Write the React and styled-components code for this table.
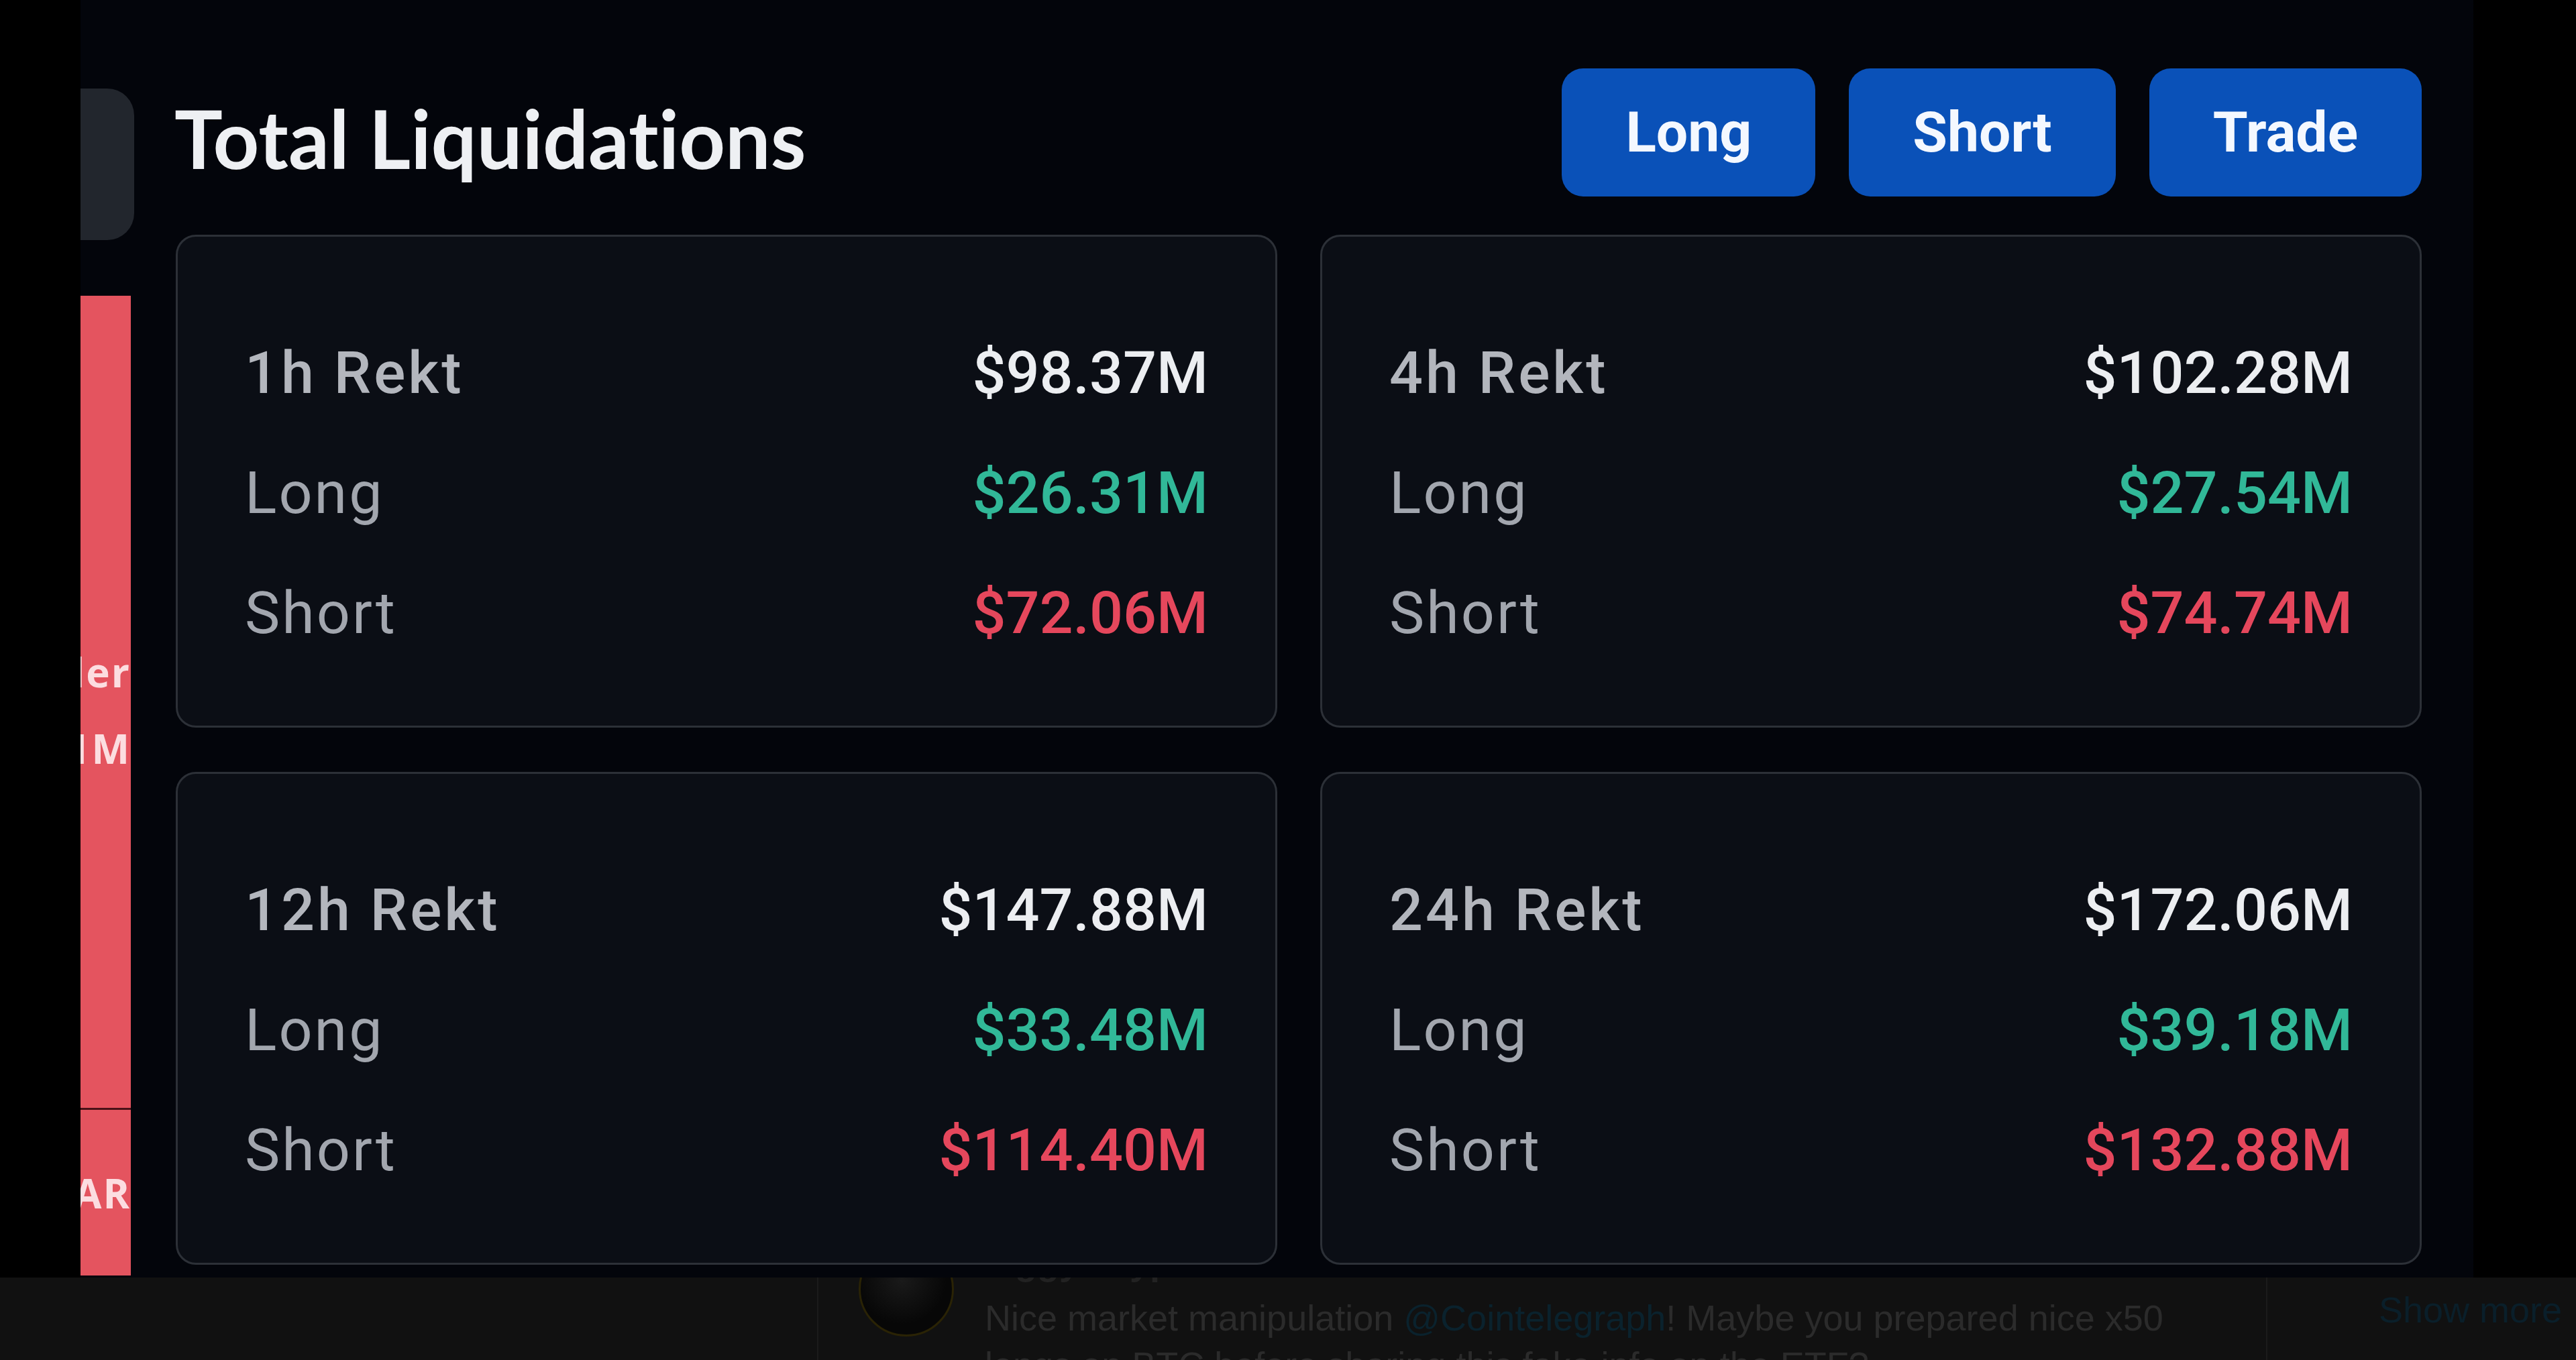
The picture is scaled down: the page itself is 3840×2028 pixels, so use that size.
import styled, { createGlobalStyle } from 'styled-components';

const GlobalStyle = createGlobalStyle`
  html, body {
    margin: 0;
    padding: 0;
    background: #000;
  }
  body {
    width: 3840px;
    height: 2028px;
    overflow: hidden;
  }
`;

const Page = styled.div`
  width: 3840px;
  height: 2028px;
  display: flex;
  flex-direction: column;
  background: #000;
`;

const Stage = styled.div`
  height: 1905px;
  display: flex;
  flex-shrink: 0;
`;

const Gutter = styled.div`
  width: ${p => p.$w}px;
  flex-shrink: 0;
  background: #000;
`;

// тёмная панель виджета
const Panel = styled.section`
  width: 3567px;
  flex-shrink: 0;
  display: flex;
  background: #03050b;
  overflow: hidden;
`;

/* ---------- левая обрезанная колонка ---------- */

const SideRail = styled.div`
  width: 80px;
  flex-shrink: 0;
  display: flex;
  flex-direction: column;
`;

const RailTab = styled.div`
  margin-top: 132px;
  height: 226px;
  background: #22262d;
  border-radius: 0 40px 40px 0;
`;

const RailBar = styled.div`
  margin-top: 83px;
  width: 75px;
  height: 1461px;
  display: flex;
  flex-direction: column;
  background: #e4545f;
`;

const RailSegment = styled.div`
  height: ${p => p.$h}px;
  padding-top: ${p => p.$shift || 0}px;
  box-sizing: border-box;
  display: flex;
  flex-direction: column;
  justify-content: center;
  align-items: flex-end;
  overflow: hidden;
`;

const RailDivider = styled.div`
  height: 3px;
  background: #4a1218;
`;

const RailText = styled.span`
  font-family: 'Open Sans', 'Liberation Sans', sans-serif;
  font-weight: 700;
  font-size: 60px;
  line-height: 114px;
  letter-spacing: 2px;
  color: rgba(255, 240, 242, 0.88);
  white-space: nowrap;
`;

/* ---------- основная часть ---------- */

const Main = styled.div`
  flex: 1;
  min-width: 0;
  padding: 102px 77px 0 62px;
  display: flex;
  flex-direction: column;
`;

const Header = styled.div`
  height: 191px;
  display: flex;
  justify-content: space-between;
  align-items: flex-start;
`;

const Title = styled.h1`
  margin: 0 0 0 -2px;
  padding-top: 44px;
  font-family: Lato, 'Open Sans', sans-serif;
  font-weight: 700;
  font-size: 120px;
  line-height: 120px;
  font-variant-ligatures: none;
  color: #eef0f3;
  white-space: nowrap;
`;

const Actions = styled.div`
  display: flex;
  gap: 50px;
`;

const ActionButton = styled.button`
  height: 191px;
  padding: 0 95px;
  border: none;
  border-radius: 32px;
  background: #0a51b8;
  color: #f4f8ff;
  font-family: Roboto, 'Liberation Sans', sans-serif;
  font-weight: 700;
  font-size: 84px;
  cursor: pointer;
`;

const Grid = styled.div`
  margin-top: 57px;
  display: grid;
  grid-template-columns: 1fr 1fr;
  column-gap: 64px;
  row-gap: 66px;
`;

const Card = styled.div`
  height: 735px;
  box-sizing: border-box;
  border: 3px solid #2c3037;
  border-radius: 30px;
  background: #0b0e15;
  padding: 113px 100px 0 100px;
`;

const StatRow = styled.div`
  height: 179px;
  display: flex;
  justify-content: space-between;
  font-family: Roboto, 'Liberation Sans', sans-serif;
  font-size: 88px;
  line-height: 179px;
`;

const StatLabel = styled.span`
  color: ${p => (p.$head ? '#b3b6bd' : '#a2a6ae')};
  font-weight: ${p => (p.$head ? 500 : 400)};
  letter-spacing: ${p => (p.$head ? 4 : 3)}px;
`;

const tones = {
  total: '#eceef1',
  long: '#31b898',
  short: '#e5475c',
};

const StatValue = styled.span`
  font-weight: 500;
  color: ${p => tones[p.$tone]};
`;

/* ---------- обрезанный твит снизу ---------- */

const TweetStrip = styled.footer`
  height: 123px;
  display: flex;
  background: #111111;
  overflow: hidden;
`;

const StripSide = styled.div`
  width: ${p => p.$w}px;
  flex-shrink: 0;
  box-sizing: border-box;
  padding: 13px 0 0 ${p => p.$pad || 0}px;
`;

const TweetColumn = styled.div`
  width: 2162px;
  flex-shrink: 0;
  box-sizing: border-box;
  border-left: 2px solid #1b1b1b;
  border-right: 2px solid #1b1b1b;
  padding-left: 60px;
  display: flex;
  gap: 46px;
`;

const Avatar = styled.div`
  width: 142px;
  height: 142px;
  flex-shrink: 0;
  margin-top: -54px;
  box-sizing: border-box;
  border-radius: 50%;
  border: 3px solid #2a2305;
  background: radial-gradient(circle at 45% 40%, #1a1a1a 0%, #070707 60%);
`;

const TweetBody = styled.div`
  margin-top: -58px;
  font-family: 'Liberation Sans', Arial, sans-serif;
  font-size: 54px;
  line-height: 70px;
  color: #2b2b2b;
  white-space: nowrap;
`;

const TweetName = styled.div`
  margin-bottom: 13px;
  color: #222;
  font-weight: 700;
`;

const TweetLine = styled.div``;

const Mention = styled.span`
  color: #0a222d;
`;

const ShowMore = styled.span`
  font-family: 'Liberation Sans', Arial, sans-serif;
  font-size: 54px;
  line-height: 70px;
  color: #0a1f2a;
`;

const stats = [
  { period: '1h', total: '$98.37M', long: '$26.31M', short: '$72.06M' },
  { period: '4h', total: '$102.28M', long: '$27.54M', short: '$74.74M' },
  { period: '12h', total: '$147.88M', long: '$33.48M', short: '$114.40M' },
  { period: '24h', total: '$172.06M', long: '$39.18M', short: '$132.88M' },
];

function RektCard({ period, total, long, short }) {
  return (
    <Card>
      <StatRow>
        <StatLabel $head>{period} Rekt</StatLabel>
        <StatValue $tone="total">{total}</StatValue>
      </StatRow>
      <StatRow>
        <StatLabel>Long</StatLabel>
        <StatValue $tone="long">{long}</StatValue>
      </StatRow>
      <StatRow>
        <StatLabel>Short</StatLabel>
        <StatValue $tone="short">{short}</StatValue>
      </StatRow>
    </Card>
  );
}

export default function App() {
  return (
    <>
      <GlobalStyle />
      <Page>
        <Stage>
          <Gutter $w={120} />
          <Panel>
            <SideRail>
              <RailTab />
              <RailBar>
                <RailSegment $h={1211} $shift={24}>
                  <RailText>Open Liquidation Order</RailText>
                  <RailText>$2.1M</RailText>
                </RailSegment>
                <RailDivider />
                <RailSegment $h={247}>
                  <RailText>YEAR</RailText>
                </RailSegment>
              </RailBar>
            </SideRail>

            <Main>
              <Header>
                <Title>Total Liquidations</Title>
                <Actions>
                  <ActionButton type="button">Long</ActionButton>
                  <ActionButton type="button">Short</ActionButton>
                  <ActionButton type="button">Trade</ActionButton>
                </Actions>
              </Header>

              <Grid>
                {stats.map(s => (
                  <RektCard key={s.period} {...s} />
                ))}
              </Grid>
            </Main>
          </Panel>
          <Gutter $w={153} />
        </Stage>

        <TweetStrip>
          <StripSide $w={1218} />
          <TweetColumn>
            <Avatar />
            <TweetBody>
              <TweetName>Jiggy Crypto</TweetName>
              <TweetLine>
                Nice market manipulation <Mention>@Cointelegraph</Mention>! Maybe you prepared nice x50
              </TweetLine>
              <TweetLine>longs on BTC before sharing this fake info on the ETF?</TweetLine>
            </TweetBody>
          </TweetColumn>
          <StripSide $w={460} $pad={166}>
            <ShowMore>Show more</ShowMore>
          </StripSide>
        </TweetStrip>
      </Page>
    </>
  );
}
